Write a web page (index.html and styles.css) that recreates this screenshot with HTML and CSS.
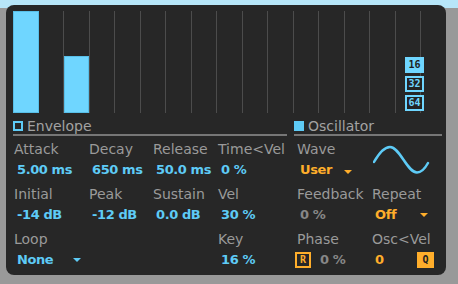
FILE: index.html
```html
<!DOCTYPE html>
<html lang="en">
<head>
    <meta charset="UTF-8">
    <title>Arpeggiator Envelope</title>
    <link rel="stylesheet" href="styles.css">
</head>
<body>
    <div class="device">
        <!-- Step Graph -->
        <div class="graph">
            <div class="steps">
                <div class="step"><div class="bar" style="height: 100%"></div></div>
                <div class="step"></div>
                <div class="step"><div class="bar" style="height: 56%"></div></div>
                <div class="step"></div>
                <div class="step"></div>
                <div class="step"></div>
                <div class="step"></div>
                <div class="step"></div>
                <div class="step"></div>
                <div class="step"></div>
                <div class="step"></div>
                <div class="step"></div>
                <div class="step"></div>
                <div class="step"></div>
                <div class="step"></div>
                <div class="step"></div>
            </div>
            <div class="rates">
                <div class="rate rate-on">16</div>
                <div class="rate">32</div>
                <div class="rate">64</div>
            </div>
        </div>

        <div class="controls">
            <!-- Envelope -->
            <div class="section envelope">
                <div class="section-head">
                    <span class="toggle"></span>
                    <span class="section-title">Envelope</span>
                </div>
                <div class="params env-params">
                    <div class="param">
                        <div class="label">Attack</div>
                        <div class="value">5.00 ms</div>
                    </div>
                    <div class="param">
                        <div class="label">Decay</div>
                        <div class="value">650 ms</div>
                    </div>
                    <div class="param">
                        <div class="label">Release</div>
                        <div class="value">50.0 ms</div>
                    </div>
                    <div class="param">
                        <div class="label">Time&lt;Vel</div>
                        <div class="value">0 %</div>
                    </div>

                    <div class="param">
                        <div class="label">Initial</div>
                        <div class="value">-14 dB</div>
                    </div>
                    <div class="param">
                        <div class="label">Peak</div>
                        <div class="value">-12 dB</div>
                    </div>
                    <div class="param">
                        <div class="label">Sustain</div>
                        <div class="value">0.0 dB</div>
                    </div>
                    <div class="param">
                        <div class="label">Vel</div>
                        <div class="value">30 %</div>
                    </div>

                    <div class="param">
                        <div class="label">Loop</div>
                        <div class="value dropdown dd-loop">None <span class="arrow"></span></div>
                    </div>
                    <div class="param"></div>
                    <div class="param"></div>
                    <div class="param">
                        <div class="label">Key</div>
                        <div class="value">16 %</div>
                    </div>
                </div>
            </div>

            <!-- Oscillator -->
            <div class="section osc">
                <div class="section-head">
                    <span class="toggle toggle-on"></span>
                    <span class="section-title">Oscillator</span>
                </div>
                <div class="params osc-params">
                    <div class="param">
                        <div class="label">Wave</div>
                        <div class="value orange dropdown dd-wave">User <span class="arrow"></span></div>
                    </div>
                    <div class="param">
                        <svg class="wave" width="58" height="30" viewBox="0 0 58 30">
                            <path d="M1,17 C5,10 11,2 17,2 C21.9,2 26.1,8.2 30.5,14.75 C34.9,21.3 39.1,27.5 44,27.5 C47.6,27.5 52,23.5 55,18" fill="none" stroke="#5ecbf6" stroke-width="2.5" stroke-linecap="round"/>
                        </svg>
                    </div>

                    <div class="param">
                        <div class="label">Feedback</div>
                        <div class="value off">0 %</div>
                    </div>
                    <div class="param">
                        <div class="label">Repeat</div>
                        <div class="value orange dropdown dd-repeat">Off <span class="arrow"></span></div>
                    </div>

                    <div class="param">
                        <div class="label">Phase</div>
                        <div class="value phase">
                            <span class="tag">R</span>
                            <span class="off">0 %</span>
                        </div>
                    </div>
                    <div class="param">
                        <div class="label">Osc&lt;Vel</div>
                        <div class="value orange quant">
                            <span>0</span>
                            <span class="tag tag-on">Q</span>
                        </div>
                    </div>
                </div>
            </div>
        </div>
    </div>
</body>
</html>
```
FILE: styles.css
```css
/* General Styling */
body {
    margin: 0;
    height: 284px;
    overflow: hidden;
    font-family: 'DejaVu Sans', sans-serif;
    background: linear-gradient(#b7e6f9 8px, #999 8px);
}

/* Device Panel */
.device {
    width: 433px;
    height: 264px;
    margin: 5px 0 0 6px;
    padding: 6px 0 0 7px;
    background: #272727;
    border-radius: 8px;
}

/* Step Graph */
.graph {
    position: relative;
    width: 408px;
    height: 102px;
}
.steps {
    display: grid;
    grid-template-columns: repeat(16, 1fr);
    height: 100%;
}
.step {
    display: flex;
    align-items: flex-end;
    border-right: 1px solid #4c4c4c;
}
.step:first-child {
    border-right: none;
}
.bar {
    width: 100%;
    box-sizing: border-box;
    background: #6fd6ff;
    border: 1px solid #58bfe8;
}

/* Rate Buttons */
.rates {
    position: absolute;
    left: 392px;
    top: 46px;
    display: flex;
    flex-direction: column;
    gap: 3px;
}
.rate {
    width: 19px;
    height: 16px;
    box-sizing: border-box;
    border: 2px solid #6fd6ff;
    background: #232323;
    color: #6fd6ff;
    font-family: 'DejaVu Sans Mono', monospace;
    font-size: 10px;
    font-weight: bold;
    line-height: 12px;
    text-align: center;
}
.rate-on {
    background: #6fd6ff;
    color: #1e1e1e;
}

/* Sections */
.controls {
    display: flex;
    gap: 7px;
    margin-top: 5px;
}
.envelope {
    width: 274px;
}
.osc {
    width: 148px;
}
.section-head {
    display: flex;
    align-items: center;
    gap: 4px;
    height: 16px;
    border-bottom: 2px solid #767676;
}
.toggle {
    width: 10px;
    height: 10px;
    box-sizing: border-box;
    border: 2px solid #5ecbf6;
}
.toggle-on {
    background: #5ecbf6;
}
.section-title {
    color: #a2a2a2;
    font-size: 14px;
    line-height: 16px;
}

/* Parameters */
.params {
    display: grid;
    row-gap: 4px;
    padding-top: 3px;
}
.env-params {
    grid-template-columns: 75px 64px 65px 1fr;
}
.osc-params {
    grid-template-columns: 75px 1fr;
    padding-left: 2px;
}
.label {
    padding-left: 1px;
    color: #9a9a9a;
    font-size: 14px;
    line-height: 20px;
    white-space: nowrap;
}
.value {
    padding-left: 4px;
    color: #5ecbf6;
    font-size: 13px;
    font-weight: bold;
    letter-spacing: -0.4px;
    line-height: 21px;
    white-space: nowrap;
}
.orange {
    color: #ffae2b;
}
.off {
    color: #878787;
}

/* Dropdowns */
.dropdown {
    display: flex;
    align-items: center;
    justify-content: space-between;
}
.dd-loop {
    width: 64px;
}
.dd-wave {
    width: 52px;
}
.dd-repeat {
    width: 53px;
}
.arrow {
    width: 0;
    height: 0;
    border-left: 4px solid transparent;
    border-right: 4px solid transparent;
    border-top: 4px solid currentColor;
}
.dd-wave .arrow {
    margin-top: 5px;
}

/* Wave Display */
.wave {
    display: block;
    margin: 6px 0 0 2px;
}

/* Phase / Quantize */
.phase {
    display: flex;
    align-items: center;
    gap: 9px;
    padding-left: 0;
    margin-left: -1px;
}
.quant {
    display: flex;
    align-items: center;
    justify-content: space-between;
    width: 59px;
}
.tag {
    width: 16px;
    height: 16px;
    box-sizing: border-box;
    border: 2px solid #ffae2b;
    color: #ffae2b;
    font-family: 'DejaVu Sans Mono', monospace;
    font-size: 10px;
    font-weight: bold;
    letter-spacing: 0;
    line-height: 12px;
    text-align: center;
}
.tag-on {
    width: 17px;
    background: #ffae2b;
    color: #222;
}
```
